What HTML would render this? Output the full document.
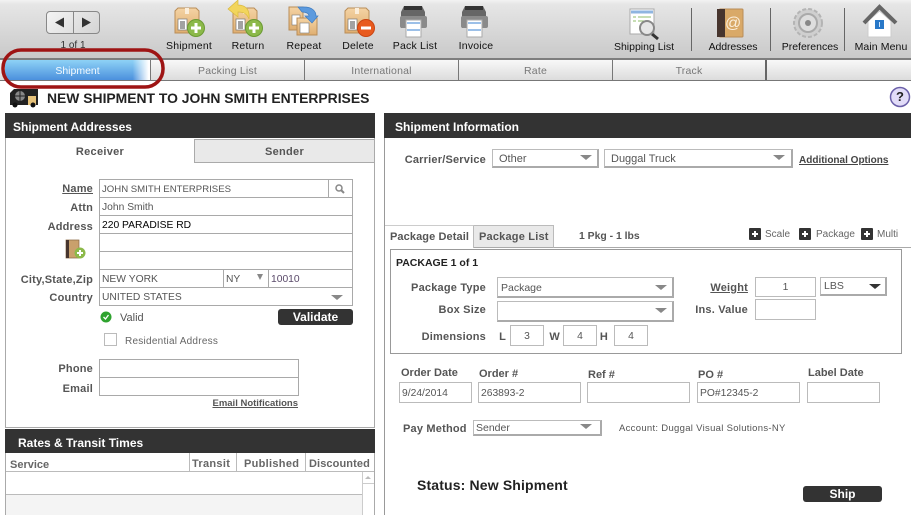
<!DOCTYPE html>
<html><head><meta charset="utf-8"><style>
html,body{margin:0;padding:0;background:#fff}
#p{position:relative;width:911px;height:515px;overflow:hidden;background:#fff;font-family:"Liberation Sans",sans-serif;font-size:11px;color:#555}
#p div,#p span{position:absolute;box-sizing:border-box}
.t{white-space:nowrap;line-height:14px;height:14px}
.l{font-weight:bold;text-align:right;color:#555;white-space:nowrap;line-height:14px;height:14px;letter-spacing:.2px}
.c{text-align:center;white-space:nowrap;line-height:14px;height:14px}
.i{border:1px solid #a9a9a9;background:#fff;line-height:19px;padding-left:2px;color:#555;font-size:10.3px;white-space:nowrap}
.s{border:1px solid #bbb;border-right:2px solid #aaa;border-bottom:2px solid #aaa;background:#fff;color:#555;padding-left:3px;white-space:nowrap}
.a{width:0;height:0;border-left:6px solid transparent;border-right:6px solid transparent;border-top:5px solid #888}
.h{background:#333;color:#fff;font-weight:bold;font-size:12px;line-height:28px}
.tl{color:#111;font-size:10.5px;letter-spacing:.2px}
.tb{top:60px;height:20px;line-height:22px;text-align:center;background:linear-gradient(#f8f8f8,#dcdcdc);border-right:1px solid #777;color:#777;font-size:10.5px;letter-spacing:.2px}
.sp{width:1px;background:#666;top:8px;height:43px}
svg{position:absolute;overflow:visible}
</style></head><body><div id="p">

<div style="left:0;top:0;width:911px;height:58px;background:linear-gradient(#f2f2f2 0,#e6e6e6 4px,#c9c9c9 100%)"></div>
<div style="left:0;top:58px;width:911px;height:2px;background:#7d7d7d"></div>

<div style="left:46px;top:11px;width:54px;height:23px;border:1px solid #888;border-radius:4px;background:linear-gradient(135deg,#f4f4f4,#d4d4d4)"></div>
<div style="left:73px;top:11px;width:1px;height:23px;background:#888"></div>
<svg style="left:0;top:0" width="120" height="40"><path d="M55 22.5l9-5v10zM91 22.5l-9-5v10z" fill="#333"/></svg>
<div class="c" style="left:43px;width:60px;top:39px;color:#333;font-size:10px">1 of 1</div>

<svg style="left:0;top:0" width="911" height="58">
<defs>
<linearGradient id="tan" x1="0" y1="0" x2="0" y2="1"><stop offset="0" stop-color="#f4d3a4"/><stop offset="1" stop-color="#dfae70"/></linearGradient>
<g id="bx"><path d="M3 0h18l3 3v22H0V3z" fill="url(#tan)" stroke="#b98d58"/><rect x="10" y="0" width="4" height="6" fill="#fbeedb"/><rect x="3" y="11" width="9" height="11" fill="#fff" stroke="#777" stroke-width=".7"/><path d="M5 14h5M5 16h5M5 18h5M5 20h5" stroke="#444"/></g>
<g id="pl"><circle r="8.5" fill="#8cb94a" stroke="#6b9a32"/><path d="M-5 0H5M0-5V5" stroke="#fff" stroke-width="3"/></g>
<g id="pr"><path d="M4 0h18l3 6v16H1V6z" fill="#666"/><rect x="4" y="0" width="18" height="4" fill="#333"/><rect x="0" y="10" width="27" height="12" rx="2" fill="#8a8a8a"/><rect x="6" y="14" width="15" height="17" fill="#fff" stroke="#aaa"/><path d="M7 17h13M7 24h13" stroke="#9cc0e8" stroke-width="2"/></g>
</defs>
<use href="#bx" x="175" y="8"/><use href="#pl" x="196" y="28"/>
<use href="#bx" x="233" y="8"/>
<path d="M228 9l10-9v5c8 0 12 5 11 14-2-5-5-7-11-7v5z" fill="#f2d55c" stroke="#d9b940" stroke-width=".7"/>
<use href="#pl" x="254" y="28"/>
<path d="M289 7h14v23h-14z" fill="url(#tan)" stroke="#b98d58"/><rect x="292" y="15" width="8" height="10" fill="#fff" stroke="#777" stroke-width=".6"/>
<path d="M297 18h20v17h-20z" fill="url(#tan)" stroke="#b98d58"/><rect x="300" y="23" width="9" height="10" fill="#fff" stroke="#777" stroke-width=".6"/>
<path d="M298 7h6c8 0 12 4 12 9h2l-6 7-7-7h4c0-3-4-4-7-4z" fill="#5c9ade" stroke="#3f7cc0" stroke-width=".7"/>
<use href="#bx" x="345" y="8"/>
<circle cx="366" cy="28" r="8.5" fill="#e85a1e" stroke="#c94412"/><path d="M361 28h10" stroke="#fff" stroke-width="3"/>
<use href="#pr" x="400" y="6"/><use href="#pr" x="461" y="6"/>
<rect x="630" y="9" width="24" height="25" fill="#fff" stroke="#aaa"/><path d="M631 12h22" stroke="#8fb5e0" stroke-width="3"/><path d="M633 17h3M638 17h13M633 21h3M638 21h8" stroke="#8fbd6a"/>
<path d="M652 34l6 5" stroke="#333" stroke-width="3"/><circle cx="647" cy="28" r="7" fill="#e6e6e6" stroke="#888" stroke-width="2"/>
<path d="M720 9h22a1 1 0 0 1 1 1v26a1 1 0 0 1-1 1h-22z" fill="#d9a968" stroke="#b98d58"/><path d="M717 9h8v28h-8z" fill="#47352e"/>
<text x="725" y="28" font-size="16" fill="#fbeedb" font-family="Liberation Sans">@</text>
<circle cx="808" cy="23" r="14" fill="#cfcfcf" stroke="#b4b4b4" stroke-width="2" stroke-dasharray="4 2"/><circle cx="808" cy="23" r="9" fill="#dedede" stroke="#aaa" stroke-width="2"/><circle cx="808" cy="23" r="3" fill="#888"/>
<path d="M868 21v16h23V21l-11.500-10z" fill="#fff" stroke="#ccc"/><path d="M864 23l15.500-16L896 23" fill="none" stroke="#666" stroke-width="4"/><rect x="875" y="20" width="9" height="9" fill="#2878c8"/><path d="M879.500 22v5" stroke="#cfe6ff"/>
</svg>

<div class="c tl" style="left:159px;width:60px;top:39px">Shipment</div>
<div class="c tl" style="left:218px;width:60px;top:39px">Return</div>
<div class="c tl" style="left:274px;width:60px;top:39px">Repeat</div>
<div class="c tl" style="left:328px;width:60px;top:39px">Delete</div>
<div class="c tl" style="left:385px;width:60px;top:39px">Pack List</div>
<div class="c tl" style="left:446px;width:60px;top:39px">Invoice</div>
<div class="c tl" style="left:604px;width:80px;top:40px;letter-spacing:0">Shipping List</div>
<div class="c tl" style="left:703px;width:60px;top:40px;letter-spacing:-.1px">Addresses</div>
<div class="c tl" style="left:775px;width:70px;top:40px;letter-spacing:0">Preferences</div>
<div class="c tl" style="left:846px;width:70px;top:40px;letter-spacing:.1px">Main Menu</div>
<div class="sp" style="left:691px"></div><div class="sp" style="left:770px"></div><div class="sp" style="left:844px"></div>

<div class="tb" style="left:0;width:5px;border:0"></div>
<div class="tb" style="left:5px;width:146px;border-right:1px solid #777;background:linear-gradient(90deg,transparent 88%,#fff 99%),linear-gradient(#8ed2f6,#4b90dd);color:#f4faff;letter-spacing:0">Shipment</div>
<div class="tb" style="left:151px;width:154px">Packing List</div>
<div class="tb" style="left:305px;width:154px">International</div>
<div class="tb" style="left:459px;width:154px">Rate</div>
<div class="tb" style="left:613px;width:154px;border-right:2px solid #666">Track</div>
<div class="tb" style="left:767px;width:144px;border:0"></div>
<div style="left:0;top:80px;width:911px;height:1px;background:#777"></div>

<svg style="left:0;top:0;z-index:3" width="911" height="100"><rect x="3" y="50" width="160" height="37" rx="18" fill="none" stroke="#9e1414" stroke-width="3.500"/></svg>

<svg style="left:0;top:0" width="911" height="112">
<path d="M10 93l4-4h24v16H10z" fill="#222"/><circle cx="20" cy="96" r="5" fill="#888"/><path d="M20 91v10M15 96h10" stroke="#222"/><rect x="28" y="96" width="8" height="9" fill="#e6c27a"/><circle cx="15" cy="105" r="2.500" fill="#111"/><circle cx="33" cy="105" r="2.500" fill="#111"/>
<circle cx="900" cy="97" r="9.500" fill="#e2dcf8" stroke="#6a5fa8" stroke-width="1.500"/>
</svg>
<div class="t" style="left:47px;top:91px;font-weight:bold;font-size:13.900px;color:#222">NEW SHIPMENT TO JOHN SMITH ENTERPRISES</div>
<div class="c" style="left:890px;width:20px;top:90px;font-weight:bold;font-size:13px;color:#222">?</div>

<div class="h" style="left:5px;top:113px;width:370px;height:25px;padding-left:8px">Shipment Addresses</div>
<div style="left:5px;top:138px;width:370px;height:290px;border:1px solid #aaa;border-top:0"></div>
<div style="left:194px;top:139px;width:181px;height:24px;background:#e9e9e9;border:1px solid #aaa"></div>
<div class="c" style="left:6px;width:188px;top:145px;font-weight:bold;color:#555;letter-spacing:.3px">Receiver</div>
<div class="c" style="left:194px;width:181px;top:145px;font-weight:bold;color:#555;letter-spacing:.3px">Sender</div>

<div class="l" style="left:20px;width:73px;top:182px;text-decoration:underline">Name</div>
<div class="l" style="left:20px;width:73px;top:201px">Attn</div>
<div class="l" style="left:20px;width:73px;top:220px">Address</div>
<div class="l" style="left:10px;width:83px;top:273px">City,State,Zip</div>
<div class="l" style="left:20px;width:73px;top:291px">Country</div>

<div class="i" style="left:99px;top:179px;width:254px;height:19px;font-size:9.600px">JOHN SMITH ENTERPRISES</div>
<div style="left:328px;top:179px;width:1px;height:19px;background:#a9a9a9"></div>
<div class="i" style="left:99px;top:197px;width:254px;height:19px">John Smith</div>
<div class="i" style="left:99px;top:215px;width:254px;height:19px;color:#000">220 PARADISE RD</div>
<div class="i" style="left:99px;top:233px;width:254px;height:19px"></div>
<div class="i" style="left:99px;top:251px;width:254px;height:19px"></div>
<div class="i" style="left:99px;top:269px;width:125px;height:19px">NEW YORK</div>
<div class="i" style="left:223px;top:269px;width:46px;height:19px">NY</div>
<div class="i" style="left:268px;top:269px;width:85px;height:19px;color:#5a4a6a">10010</div>
<div class="a" style="left:257px;top:274px;border-left-width:3px;border-right-width:3px;border-top-width:6px"></div>
<div class="i" style="left:99px;top:287px;width:254px;height:19px">UNITED STATES</div>
<div class="a" style="left:331px;top:295px"></div>
<svg style="left:0;top:0" width="360" height="270">
<circle cx="339" cy="188" r="3" fill="none" stroke="#888" stroke-width="1.500"/><path d="M341 190l3 3" stroke="#888" stroke-width="2"/>
<path d="M66 240h13v18H66z" fill="#c9a06c" stroke="#8a6a44" stroke-width=".7"/><path d="M66 240h3v18h-3z" fill="#47352e"/>
<circle cx="80" cy="253" r="5.500" fill="#8cb94a"/><path d="M77 253h6M80 250v6" stroke="#fff" stroke-width="2"/>
</svg>

<svg style="left:0;top:0" width="130" height="330"><circle cx="106" cy="317" r="5.500" fill="#2fa32f"/><path d="M103.500 317l2 2 3-4" fill="none" stroke="#fff" stroke-width="1.300"/></svg>
<div class="t" style="left:120px;top:311px">Valid</div>
<div style="left:278px;top:309px;width:75px;height:16px;background:#333;border-radius:3px;color:#fff;font-weight:bold;font-size:12px;line-height:17px;text-align:center">Validate</div>
<div style="left:104px;top:333px;width:13px;height:13px;border:1px solid #bbb"></div>
<div class="t" style="left:125px;top:335px;font-size:10px;color:#666;letter-spacing:.25px">Residential Address</div>
<div class="l" style="left:20px;width:73px;top:362px">Phone</div>
<div class="l" style="left:20px;width:73px;top:382px">Email</div>
<div class="i" style="left:99px;top:359px;width:200px;height:19px"></div>
<div class="i" style="left:99px;top:377px;width:200px;height:19px"></div>
<div class="l" style="left:180px;width:118px;top:397px;font-size:9.500px;letter-spacing:0;text-decoration:underline">Email Notifications</div>

<div class="h" style="left:5px;top:429px;width:370px;height:24px;padding-left:13px">Rates &amp; Transit Times</div>
<div style="left:5px;top:453px;width:370px;height:62px;border-left:1px solid #aaa;border-right:1px solid #aaa"></div>
<div style="left:6px;top:471px;width:368px;height:1px;background:#bbb"></div>
<div style="left:6px;top:494px;width:356px;height:21px;background:#f4f4f4;border-top:1px solid #bbb"></div>
<div style="left:362px;top:472px;width:1px;height:43px;background:#ccc"></div>
<div style="left:362px;top:483px;width:12px;height:1px;background:#ccc"></div>
<div class="a" style="left:365px;top:476px;border-left-width:3px;border-right-width:3px;border-top:0;border-bottom:3px solid #bbb"></div>
<div style="left:189px;top:453px;width:1px;height:18px;background:#bbb"></div>
<div style="left:236px;top:453px;width:1px;height:18px;background:#bbb"></div>
<div style="left:305px;top:453px;width:1px;height:18px;background:#bbb"></div>
<div class="t" style="left:10px;top:458px;font-weight:bold;color:#666">Service</div>
<div class="t" style="left:192px;top:457px;font-weight:bold;color:#666;letter-spacing:.3px">Transit</div>
<div class="t" style="left:244px;top:457px;font-weight:bold;color:#666;letter-spacing:.3px">Published</div>
<div class="t" style="left:309px;top:457px;font-weight:bold;color:#666;letter-spacing:.1px">Discounted</div>

<div class="h" style="left:384px;top:113px;width:527px;height:25px;padding-left:11px">Shipment Information</div>
<div style="left:384px;top:138px;width:1px;height:377px;background:#999"></div>
<div class="l" style="left:390px;width:96px;top:153px">Carrier/Service</div>
<div class="s" style="left:492px;top:149px;width:107px;height:19px;line-height:18px;padding-left:6px">Other</div>
<div class="a" style="left:580px;top:155px"></div>
<div class="s" style="left:604px;top:149px;width:189px;height:19px;line-height:18px;padding-left:6px">Duggal Truck</div>
<div class="a" style="left:773px;top:155px"></div>
<div class="t" style="left:799px;top:154px;font-weight:bold;font-size:10px;text-decoration:underline;color:#444">Additional Options</div>

<div style="left:385px;top:247px;width:526px;height:1px;background:#aaa"></div>
<div style="left:473px;top:225px;width:81px;height:23px;background:#e9e9e9;border:1px solid #bbb;border-bottom:1px solid #aaa"></div>
<div style="left:385px;top:225px;width:89px;height:23px;background:#fff;border-top:1px solid #ccc;border-right:1px solid #bbb"></div>
<div class="t" style="left:390px;top:230px;font-weight:bold;color:#555;letter-spacing:.1px">Package Detail</div>
<div class="t" style="left:479px;top:230px;font-weight:bold;color:#555;letter-spacing:.2px">Package List</div>
<div class="t" style="left:579px;top:230px;font-weight:bold;font-size:10.400px;color:#555">1 Pkg - 1 lbs</div>
<div style="left:749px;top:228px;width:12px;height:12px;background:#333;border-radius:1px"></div>
<div style="left:799px;top:228px;width:12px;height:12px;background:#333;border-radius:1px"></div>
<div style="left:861px;top:228px;width:12px;height:12px;background:#333;border-radius:1px"></div>
<svg style="left:0;top:0" width="911" height="250"><path d="M752 234h6M755 231v6M802 234h6M805 231v6M864 234h6M867 231v6" stroke="#fff" stroke-width="2"/></svg>
<div class="t" style="left:765px;top:228px;font-size:10px;color:#666">Scale</div>
<div class="t" style="left:816px;top:228px;font-size:10px;color:#666">Package</div>
<div class="t" style="left:877px;top:228px;font-size:10px;color:#666">Multi</div>

<div style="left:390px;top:249px;width:512px;height:105px;border:1px solid #999"></div>
<div class="t" style="left:396px;top:256px;font-weight:bold;font-size:10.500px;color:#222">PACKAGE 1 of 1</div>
<div class="l" style="left:400px;width:86px;top:281px">Package Type</div>
<div class="l" style="left:400px;width:86px;top:303px">Box Size</div>
<div class="l" style="left:400px;width:86px;top:330px">Dimensions</div>
<div class="s" style="left:497px;top:277px;width:177px;height:21px;line-height:20px;font-size:10.500px">Package</div>
<div class="a" style="left:655px;top:285px"></div>
<div class="s" style="left:497px;top:301px;width:177px;height:21px"></div>
<div class="a" style="left:655px;top:308px"></div>
<div class="l" style="left:700px;width:48px;top:281px;text-decoration:underline">Weight</div>
<div class="l" style="left:680px;width:68px;top:303px">Ins. Value</div>
<div class="i" style="left:755px;top:277px;width:61px;height:20px;text-align:center;padding:0;line-height:19px;border-color:#bbb">1</div>
<div class="s" style="left:820px;top:277px;width:67px;height:19px;line-height:17px;font-size:10.500px">LBS</div>
<div class="a" style="left:869px;top:284px;border-top-color:#333"></div>
<div class="i" style="left:755px;top:299px;width:61px;height:21px;border-color:#bbb"></div>
<div class="l" style="left:494px;width:12px;top:330px">L</div>
<div class="i" style="left:510px;top:325px;width:34px;height:21px;text-align:center;padding:0;line-height:21px;border-color:#bbb">3</div>
<div class="l" style="left:546px;width:14px;top:330px">W</div>
<div class="i" style="left:563px;top:325px;width:34px;height:21px;text-align:center;padding:0;line-height:21px;border-color:#bbb">4</div>
<div class="l" style="left:598px;width:10px;top:330px">H</div>
<div class="i" style="left:614px;top:325px;width:34px;height:21px;text-align:center;padding:0;line-height:21px;border-color:#bbb">4</div>

<div class="t" style="left:401px;top:366px;font-weight:bold;color:#555">Order Date</div>
<div class="t" style="left:479px;top:367px;font-weight:bold;color:#555">Order #</div>
<div class="t" style="left:588px;top:368px;font-weight:bold;color:#555">Ref #</div>
<div class="t" style="left:698px;top:368px;font-weight:bold;color:#555">PO #</div>
<div class="t" style="left:808px;top:366px;font-weight:bold;color:#555">Label Date</div>
<div class="i" style="left:399px;top:382px;width:73px;height:21px;border-color:#bbb;line-height:21px">9/24/2014</div>
<div class="i" style="left:478px;top:382px;width:103px;height:21px;border-color:#bbb;line-height:21px">263893-2</div>
<div class="i" style="left:587px;top:382px;width:103px;height:21px;border-color:#bbb"></div>
<div class="i" style="left:697px;top:382px;width:103px;height:21px;border-color:#bbb;line-height:21px">PO#12345-2</div>
<div class="i" style="left:807px;top:382px;width:73px;height:21px;border-color:#bbb"></div>

<div class="t" style="left:403px;top:422px;font-weight:bold;color:#555;letter-spacing:.2px">Pay Method</div>
<div class="s" style="left:473px;top:420px;width:129px;height:16px;line-height:15px;font-size:10.500px;padding-left:2px">Sender</div>
<div class="a" style="left:580px;top:424px"></div>
<div class="t" style="left:619px;top:422px;font-size:9.500px;color:#555;letter-spacing:.3px">Account: Duggal Visual Solutions-NY</div>
<div class="t" style="left:417px;top:478px;font-weight:bold;font-size:14px;color:#222;line-height:15px;letter-spacing:.15px">Status: New Shipment</div>
<div style="left:803px;top:486px;width:79px;height:16px;background:#333;border-radius:3px;color:#fff;font-weight:bold;font-size:12px;line-height:17px;text-align:center">Ship</div>
</div></body></html>
